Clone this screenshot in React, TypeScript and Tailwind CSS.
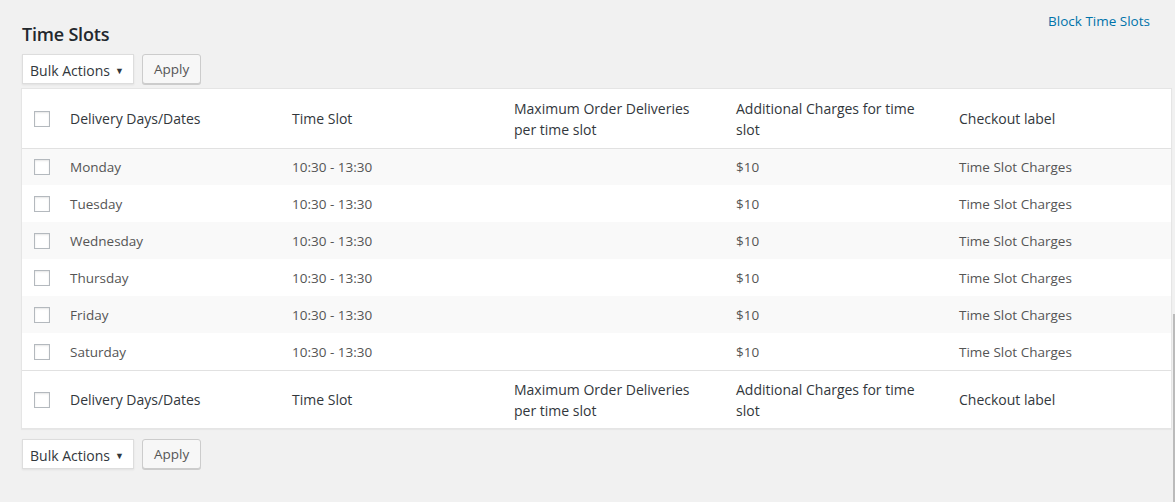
const days = ["Monday", "Tuesday", "Wednesday", "Thursday", "Friday", "Saturday"];

function Checkbox() {
  return (
    <span className="block w-4 h-4 border border-[#b4b9be] bg-white shadow-[inset_0_1px_2px_rgba(0,0,0,0.1)]" />
  );
}

function BulkBar() {
  return (
    <div className="flex items-center gap-2 pl-[22px]">
      <div className="flex items-center h-[30px] w-[112px] border border-[#ddd] bg-white shadow-[0_1px_2px_rgba(0,0,0,0.07)] pl-[7px] pt-[2px] text-[14px] text-[#32373c]">
        <span>Bulk Actions</span>
        <span className="ml-[5px] text-[9px] leading-none">▼</span>
      </div>
      <button className="h-[30px] px-[11px] pt-[1px] rounded-[3px] border border-[#ccc] bg-[#f7f7f7] shadow-[0_1px_0_#ccc] text-[13.5px] text-[#555]">
        Apply
      </button>
    </div>
  );
}

function HeadRow({ top }: { top?: boolean }) {
  return (
    <tr className={top ? "h-[59px] border-b border-[#e1e1e1]" : "h-[58px] border-t border-[#e1e1e1]"}>
      <td className="w-[38px] pl-[12px] pt-[2px] align-middle">
        <Checkbox />
      </td>
      <td className="w-[222px] pl-[10px] pr-[10px] pt-[1px] align-middle">Delivery Days/Dates</td>
      <td className="w-[222px] pl-[10px] pr-[10px] pt-[1px] align-middle">Time Slot</td>
      <td className="w-[222px] pl-[10px] pr-[10px] pt-[1px] align-middle leading-[21px]">
        Maximum Order Deliveries
        <br />
        per time slot
      </td>
      <td className="w-[222px] pl-[10px] pr-[10px] pt-[1px] align-middle leading-[21px]">
        Additional Charges for time
        <br />
        slot
      </td>
      <td className="pl-[11px] pt-[1px] align-middle">Checkout label</td>
    </tr>
  );
}

export default function App() {
  return (
    <div
      className="relative w-[1175px] h-[502px] bg-[#f1f1f1] overflow-hidden"
      style={{ fontFamily: '"Open Sans", "Noto Sans", sans-serif' }}
    >
      <div className="flex justify-between items-start pt-[11px]">
        <h1 className="pl-[22px] pt-[11px] text-[18px] font-semibold text-[#23282d] leading-[24px] tracking-[-0.2px]">
          Time Slots
        </h1>
        <a className="pr-[25px] text-[13.5px] text-[#0073aa] leading-[20px]">Block Time Slots</a>
      </div>
      <div className="mt-[8px]">
        <BulkBar />
      </div>
      <div className="mt-[4px] ml-[21px] w-[1151px] border border-[#e5e5e5] bg-white shadow-[0_1px_1px_rgba(0,0,0,0.04)]">
        <table className="w-full border-collapse table-fixed text-left">
          <thead className="text-[14px] text-[#32373c]">
            <HeadRow top />
          </thead>
          <tbody className="text-[13.5px] text-[#555]">
            {days.map((d, i) => (
              <tr key={d} className={i % 2 === 0 ? "h-[37px] bg-[#f9f9f9]" : "h-[37px] bg-white"}>
                <td className="pl-[12px] pt-[1px] align-middle">
                  <Checkbox />
                </td>
                <td className="pl-[10px] pt-[1px] align-middle">{d}</td>
                <td className="pl-[10px] pt-[1px] align-middle">10:30 - 13:30</td>
                <td className="pl-[10px] pt-[1px] align-middle"></td>
                <td className="pl-[10px] pt-[1px] align-middle">$10</td>
                <td className="pl-[11px] pt-[1px] align-middle">Time Slot Charges</td>
              </tr>
            ))}
          </tbody>
          <tfoot className="text-[14px] text-[#32373c]">
            <HeadRow />
          </tfoot>
        </table>
      </div>
      <div className="mt-[10px]">
        <BulkBar />
      </div>
      <div className="absolute right-0 top-[314px] bottom-0 w-[2px] bg-[#bbb]" />
    </div>
  );
}
